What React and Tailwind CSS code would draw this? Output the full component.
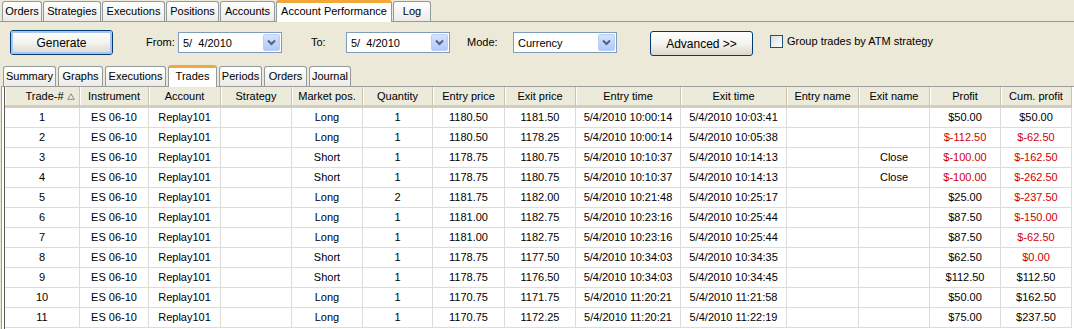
import React from 'react';

const topTabs = [
  { label: 'Orders', w: 'w-[40px]' },
  { label: 'Strategies', w: 'w-[58px]' },
  { label: 'Executions', w: 'w-[63px]' },
  { label: 'Positions', w: 'w-[53px]' },
  { label: 'Accounts', w: 'w-[55px]' },
  { label: 'Account Performance', w: 'w-[116px]', active: true },
  { label: 'Log', w: 'w-[38px]' },
];

const subTabs = [
  { label: 'Summary', w: 'w-[53px]' },
  { label: 'Graphs', w: 'w-[45px]' },
  { label: 'Executions', w: 'w-[61px]' },
  { label: 'Trades', w: 'w-[49px]', active: true },
  { label: 'Periods', w: 'w-[43px]' },
  { label: 'Orders', w: 'w-[43px]' },
  { label: 'Journal', w: 'w-[42px]' },
];

const headers = [
  'Trade-#', 'Instrument', 'Account', 'Strategy', 'Market pos.', 'Quantity', 'Entry price',
  'Exit price', 'Entry time', 'Exit time', 'Entry name', 'Exit name', 'Profit', 'Cum. profit',
];

// columns sized to line up with the grid in the screenshot
const cols = 'grid grid-cols-[75px_69px_72px_71px_71px_70px_72px_71px_105px_106px_72px_71px_71px_71px]';

const trades = [
  [1, 'Long', 1, '1180.50', '1181.50', '10:00:14', '10:03:41', '', '$50.00', '$50.00'],
  [2, 'Long', 1, '1180.50', '1178.25', '10:00:14', '10:05:38', '', '$-112.50', '$-62.50'],
  [3, 'Short', 1, '1178.75', '1180.75', '10:10:37', '10:14:13', 'Close', '$-100.00', '$-162.50'],
  [4, 'Short', 1, '1178.75', '1180.75', '10:10:37', '10:14:13', 'Close', '$-100.00', '$-262.50'],
  [5, 'Long', 2, '1181.75', '1182.00', '10:21:48', '10:25:17', '', '$25.00', '$-237.50'],
  [6, 'Long', 1, '1181.00', '1182.75', '10:23:16', '10:25:44', '', '$87.50', '$-150.00'],
  [7, 'Long', 1, '1181.00', '1182.75', '10:23:16', '10:25:44', '', '$87.50', '$-62.50'],
  [8, 'Short', 1, '1178.75', '1177.50', '10:34:03', '10:34:35', '', '$62.50', '$0.00', true],
  [9, 'Short', 1, '1178.75', '1176.50', '10:34:03', '10:34:45', '', '$112.50', '$112.50'],
  [10, 'Long', 1, '1170.75', '1171.75', '11:20:21', '11:21:58', '', '$50.00', '$162.50'],
  [11, 'Long', 1, '1170.75', '1172.25', '11:20:21', '11:22:19', '', '$75.00', '$237.50'],
];

const Chevron = () => (
  <svg width="9" height="7" viewBox="0 0 9 7">
    <path d="M1 1.5 L4.5 5 L8 1.5" fill="none" stroke="#4D6185" strokeWidth="2" />
  </svg>
);

const Combo = ({ value, w }) => (
  <div className={`${w} h-[21px] bg-white border border-[#7F9DB9] flex items-center`}>
    <span className="flex-1 pl-[4px] pt-px whitespace-pre">{value}</span>
    <div className="w-[17px] h-[17px] mr-px rounded-[2px] bg-gradient-to-b from-[#D6E2FC] to-[#B3C9F7] border border-[#B9CDF6] flex items-center justify-center">
      <Chevron />
    </div>
  </div>
);

const Tab = ({ label, w, active }) =>
  active ? (
    <div className={`${w} h-[22px] -mb-px relative z-10 bg-white border-x border-[#919B9C] border-t-[3px] border-t-[#F2A73B] rounded-t-[3px] flex items-center justify-center pb-[2px]`}>
      {label}
    </div>
  ) : (
    <div className={`${w} h-[20px] bg-gradient-to-b from-white to-[#ECEBE6] border border-b-0 border-[#919B9C] rounded-t-[3px] flex items-center justify-center`}>
      {label}
    </div>
  );

const XPButton = ({ label, focus }) => (
  <div className="w-[103px] h-[25px] rounded-[3px] border border-[#003C74] bg-gradient-to-b from-white via-[#F4F3EE] to-[#DCD8CC] flex items-center justify-center">
    <div className={`w-full h-full rounded-[2px] flex items-center justify-center text-[12px] ${focus ? 'border-2 border-[#A9C6F2]' : ''}`}>
      {label}
    </div>
  </div>
);

const Cell = ({ children, red }) => (
  <div className={`h-[20px] border-r border-b border-[#DEDCD6] flex items-center justify-center ${red ? 'text-[#D00000]' : ''}`}>
    {children}
  </div>
);

const App = () => {
  return (
    <div className="w-[1074px] h-[329px] overflow-hidden bg-[#ECE9D8] text-black text-[11px] leading-none font-['Liberation_Sans',Arial,sans-serif]">
      {/* main tabs */}
      <div className="h-[22px] flex items-end gap-[1px] pl-[2px] border-b border-[#919B9C]">
        {topTabs.map((t) => (
          <Tab key={t.label} {...t} />
        ))}
      </div>

      {/* toolbar */}
      <div className="h-[41px] flex items-center pl-[10px]">
        <XPButton label="Generate" focus />
        <span className="ml-[33px] w-[32px]">From:</span>
        <Combo value="5/  4/2010" w="w-[104px]" />
        <span className="ml-[29px] w-[35px]">To:</span>
        <Combo value="5/  4/2010" w="w-[104px]" />
        <span className="ml-[17px] w-[46px]">Mode:</span>
        <Combo value="Currency" w="w-[104px]" />
        <div className="ml-[33px] mt-[2px]">
          <XPButton label="Advanced >>" />
        </div>
        <div className="ml-[17px] w-[13px] h-[13px] border border-[#1C5180] bg-gradient-to-br from-[#DCDCD7] to-white mb-[3px]" />
        <span className="ml-[4px] mb-[3px]">Group trades by ATM strategy</span>
      </div>

      {/* sub tabs */}
      <div className="h-[23px] flex items-end gap-[2px] pl-[3px]">
        {subTabs.map((t) => (
          <Tab key={t.label} {...t} />
        ))}
      </div>

      {/* trades grid */}
      <div className="ml-[1px] border-l border-t border-[#9D9D9D] pl-[2px] bg-white h-[300px]">
        <div className="border-l border-[#5A5A5A] h-full">
          <div className={`${cols} h-[21px]`}>
            {headers.map((h) => (
              <div
                key={h}
                className={`bg-[#EBEADB] border-r border-[#C7C5B2] border-b-[3px] border-b-[#D2CEBD] shadow-[inset_1px_0_0_#FFFFFF] flex items-center justify-center pt-px ${h === 'Trade-#' ? 'pl-[16px]' : ''}`}
              >
                {h}
                {h === 'Trade-#' && (
                  <svg className="ml-[3px]" width="8" height="7" viewBox="0 0 8 7">
                    <path d="M4 0.8 L7.3 6.3 L0.7 6.3 Z" fill="none" stroke="#8A8A8A" strokeWidth="1" />
                  </svg>
                )}
              </div>
            ))}
          </div>
          {trades.map((r) => {
            const [n, pos, qty, entry, exit, t1, t2, exitName, profit, cum, forceRed] = r;
            const profitRed = profit.startsWith('$-');
            const cumRed = forceRed || cum.startsWith('$-');
            return (
              <div key={n} className={cols}>
                <Cell>{n}</Cell>
                <Cell>ES 06-10</Cell>
                <Cell>Replay101</Cell>
                <Cell />
                <Cell>{pos}</Cell>
                <Cell>{qty}</Cell>
                <Cell>{entry}</Cell>
                <Cell>{exit}</Cell>
                <Cell>5/4/2010 {t1}</Cell>
                <Cell>5/4/2010 {t2}</Cell>
                <Cell />
                <Cell>{exitName}</Cell>
                <Cell red={profitRed}>{profit}</Cell>
                <Cell red={cumRed}>{cum}</Cell>
              </div>
            );
          })}
        </div>
      </div>
    </div>
  );
};

export default App;
